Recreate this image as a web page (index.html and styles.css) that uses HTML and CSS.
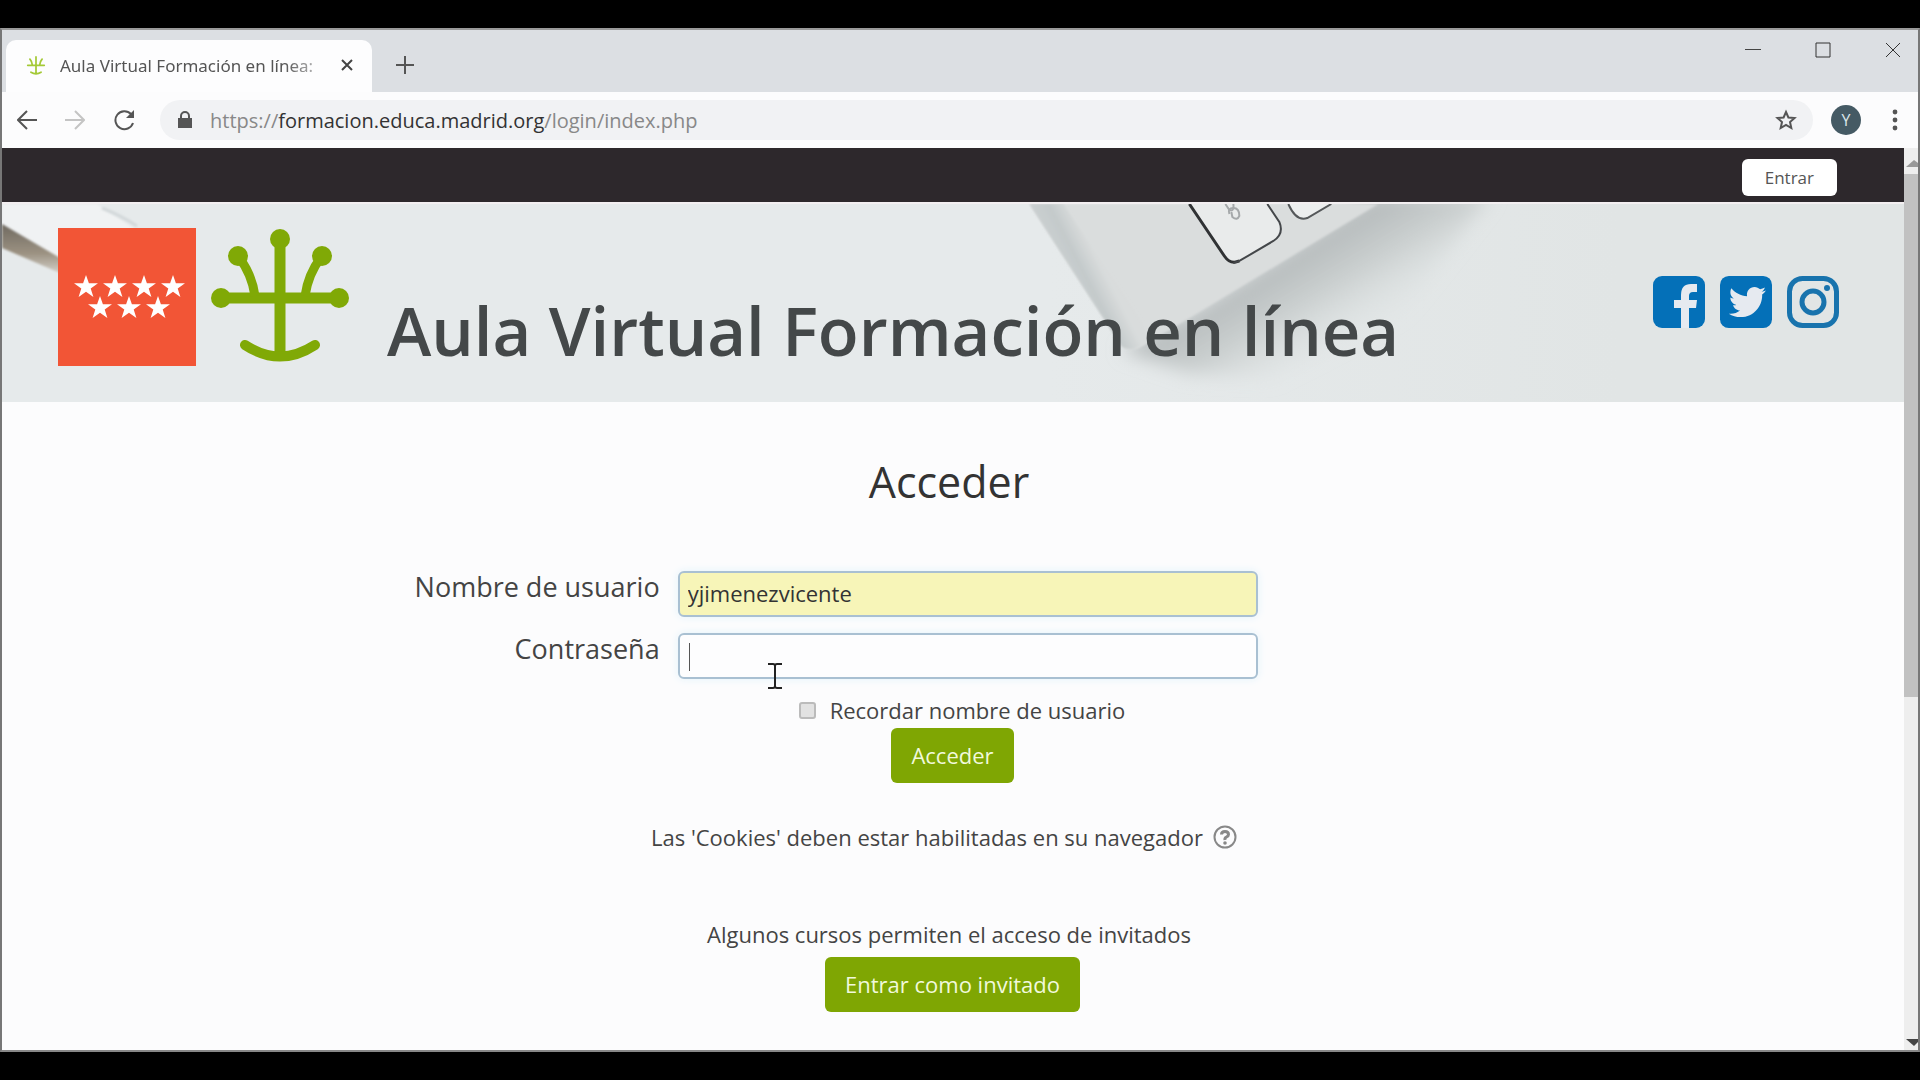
FILE: index.html
```html
<!DOCTYPE html>
<html lang="es">
<head>
    <meta charset="UTF-8" />
    <meta name="viewport" content="width=device-width, initial-scale=1.0"/>
    <title>Aula Virtual Formación en línea</title>
    <link rel="stylesheet" href="styles.css">
</head>
<body>
    <div class="window">
        <!-- TAB STRIP -->
        <div class="tabs">
            <div class="tab">
                <svg class="favicon" viewBox="0 0 138 136" fill="none" stroke="#a4c936" stroke-width="12" stroke-linecap="round">
                    <path d="M69 12V128M12 70H126M44 68Q42 44 27 27M94 68Q96 44 111 27M34 118Q69 140 104 118"/>
                </svg>
                <span class="tab-title">Aula Virtual Formación en línea:</span>
                <button class="icon-btn" aria-label="Cerrar pestaña">
                    <svg width="14" height="14" viewBox="0 0 14 14" stroke="#444" stroke-width="2"><path d="M2 2L12 12M12 2L2 12"/></svg>
                </button>
            </div>
            <button class="icon-btn new-tab" aria-label="Nueva pestaña">
                <svg width="20" height="20" viewBox="0 0 20 20" stroke="#555" stroke-width="2"><path d="M10 1V19M1 10H19"/></svg>
            </button>
            <div class="window-controls">
                <button class="icon-btn" aria-label="Minimizar">
                    <svg width="16" height="16" viewBox="0 0 16 16" stroke="#444" stroke-width="1"><path d="M0 7.500H16"/></svg>
                </button>
                <button class="icon-btn" aria-label="Maximizar">
                    <svg width="16" height="16" viewBox="0 0 16 16" fill="none" stroke="#333"><path d="M1 1H15V15H1Z"/></svg>
                </button>
                <button class="icon-btn" aria-label="Cerrar">
                    <svg width="16" height="16" viewBox="0 0 16 16" stroke="#333"><path d="M1 1L15 15M15 1L1 15"/></svg>
                </button>
            </div>
        </div>

        <!-- ADDRESS BAR -->
        <div class="toolbar">
            <div class="nav-buttons">
                <button class="icon-btn" aria-label="Atrás">
                    <svg width="20" height="20" viewBox="0 0 20 20" fill="none" stroke="#555" stroke-width="2"><path d="M20 10H2M10 1L1 10L10 19"/></svg>
                </button>
                <button class="icon-btn" aria-label="Adelante">
                    <svg width="20" height="20" viewBox="0 0 20 20" fill="none" stroke="#c4c4c4" stroke-width="2"><path d="M0 10H18M10 1L19 10L10 19"/></svg>
                </button>
                <button class="icon-btn" aria-label="Recargar">
                    <svg width="22" height="22" viewBox="0 0 22 22" fill="none" stroke="#555" stroke-width="2"><path d="M18 5A9 9 0 1 0 20 14"/><path d="M21 1V9H13Z" fill="#555" stroke="none"/></svg>
                </button>
            </div>
            <div class="address">
                <svg width="14" height="18" viewBox="0 0 14 18"><path d="M0 7H14V17H0Z" fill="#555"/><path d="M3 8V5A4 4 0 0 1 11 5V8" fill="none" stroke="#555" stroke-width="2"/></svg>
                <span class="url">https://<b>formacion.educa.madrid.org</b>/login/index.php</span>
                <button class="icon-btn" aria-label="Añadir a marcadores">
                    <svg width="22" height="22" viewBox="0 0 22 22" fill="none" stroke="#555" stroke-width="2"><path d="M11 3L13.400 8.500L19.500 9L15 13L16.300 19L11 15.800L5.700 19L7 13L2.500 9L8.600 8.500Z"/></svg>
                </button>
            </div>
            <span class="avatar">Y</span>
            <button class="icon-btn menu" aria-label="Menú">
                <svg width="6" height="22" viewBox="0 0 6 22" fill="#555"><circle cx="3" cy="3" r="2.400"/><circle cx="3" cy="11" r="2.400"/><circle cx="3" cy="19" r="2.400"/></svg>
            </button>
        </div>

        <div class="viewport">
            <div class="page">
                <div class="topbar">
                    <a href="#login" class="login-link">Entrar</a>
                </div>

                <!-- BANNER -->
                <header class="banner">
                    <svg class="banner-bg" viewBox="0 0 1903 200" preserveAspectRatio="xMidYMin slice">
                        <defs>
                            <linearGradient id="desk">
                                <stop offset="0.550" stop-color="#e6eaeb"/>
                                <stop offset="0.850" stop-color="#e1e5e5"/>
                            </linearGradient>
                            <linearGradient id="shadow" gradientUnits="userSpaceOnUse" x1="1265" y1="65" x2="1325" y2="165">
                                <stop offset="0" stop-color="#b6bbbc"/>
                                <stop offset="0.400" stop-color="#cacfcf"/>
                                <stop offset="1" stop-color="#e2e6e6" stop-opacity="0"/>
                            </linearGradient>
                            <linearGradient id="bevel" gradientUnits="userSpaceOnUse" x1="1070" y1="85" x2="1103" y2="68">
                                <stop offset="0" stop-color="#cbd0d1"/>
                                <stop offset="0.500" stop-color="#c4cacb"/>
                                <stop offset="1" stop-color="#d9dcdc"/>
                            </linearGradient>
                            <linearGradient id="pencil" x1="0" y1="0" x2="0" y2="1">
                                <stop offset="0" stop-color="#6f6960"/>
                                <stop offset="0.600" stop-color="#9c9282"/>
                                <stop offset="1" stop-color="#d3cfc8"/>
                            </linearGradient>
                            <filter id="soft" x="-20%" y="-20%" width="140%" height="140%"><feGaussianBlur stdDeviation="9"/></filter>
                            <filter id="edge"><feGaussianBlur stdDeviation="1"/></filter>
                        </defs>
                        <rect width="1903" height="200" fill="url(#desk)"/>
                        <path d="M0 0H95L140 30L58 54L0 20Z" fill="#f0f2f3" filter="url(#edge)"/>
                        <path d="M100 4Q120 12 135 22" fill="none" stroke="#d3d8da" stroke-width="3" filter="url(#edge)"/>
                        <path d="M0 20L58 54V69L0 44Z" fill="url(#pencil)" filter="url(#edge)"/>
                        <path d="M1120 146L1193 108L1375 -10H1490L1400 110L1270 175L1190 170Z" fill="url(#shadow)" filter="url(#soft)"/>
                        <path d="M1028 0H1377L1193 111L1141 142Q1129 149 1120 142Z" fill="#dadddd" filter="url(#edge)"/>
                        <path d="M1028 0H1062L1142 120L1145 138Q1130 150 1120 142Z" fill="url(#bevel)" filter="url(#edge)"/>
                        <path d="M1188 0L1223 52Q1229 60 1238 57L1272 37Q1283 30 1278 18L1266 0Z" fill="#e9ebeb"/>
                        <path d="M1188 0L1223 52Q1229 61 1238 57" fill="none" stroke="#303234" stroke-width="3"/>
                        <path d="M1232 59Q1236 58 1238 57L1272 37Q1283 30 1278 18L1266 0" fill="none" stroke="#44474a" stroke-width="2"/>
                        <path d="M1287 0Q1295 18 1306 14L1330 0Z" fill="#eceeee"/>
                        <path d="M1287 0Q1295 18 1306 14L1330 0" fill="none" stroke="#55585a" stroke-width="2"/>
                        <g fill="none" stroke="#a5a8aa" stroke-width="2">
                            <path d="M1224 0L1228 6Q1233 8 1232 0"/>
                            <path d="M1228 10Q1226 4 1232 4Q1238 4 1238 12Q1236 17 1231 13L1230 8"/>
                        </g>
                    </svg>

                    <div class="brand">
                        <svg class="logo" viewBox="0 0 138 138">
                            <defs>
                                <path id="star" d="M0 -12L2.900 -3.800H12L4.700 1.400L7.400 10L0 4.800L-7.400 10L-4.700 1.400L-12 -3.800H-2.900Z"/>
                            </defs>
                            <rect width="138" height="138" fill="#f25536"/>
                            <g fill="#fff">
                                <use href="#star" x="28" y="59"/>
                                <use href="#star" x="57" y="59"/>
                                <use href="#star" x="86" y="59"/>
                                <use href="#star" x="115" y="59"/>
                                <use href="#star" x="42" y="80"/>
                                <use href="#star" x="71" y="80"/>
                                <use href="#star" x="100" y="80"/>
                            </g>
                        </svg>
                        <svg class="logo" viewBox="0 0 138 138" fill="none" stroke="#80a906">
                            <path d="M69 10V128M10 70H128" stroke-width="11"/>
                            <path d="M44 68Q41 46 27 28M94 68Q97 46 111 28" stroke-width="9"/>
                            <path d="M34 117Q69 140 104 117" stroke-width="10" stroke-linecap="round"/>
                            <g fill="#80a906" stroke="none">
                                <circle cx="69" cy="11" r="10"/>
                                <circle cx="27" cy="28" r="10"/>
                                <circle cx="111" cy="28" r="10"/>
                                <circle cx="10" cy="70" r="10"/>
                                <circle cx="128" cy="70" r="10"/>
                            </g>
                        </svg>
                        <h1>Aula Virtual Formación en línea</h1>
                    </div>

                    <div class="social">
                        <a href="#facebook" aria-label="Facebook">
                            <svg viewBox="0 0 52 52"><rect width="52" height="52" rx="9" fill="#0470b8"/><path d="M28 52V32H21V24H28V19Q28 8 38 8H44V16H40Q36 16 36 20V24H44L43 32H36V52Z" fill="#e6eaf0"/></svg>
                        </a>
                        <a href="#twitter" aria-label="Twitter">
                            <svg viewBox="0 32 448 448"><rect y="32" width="448" height="448" rx="76" fill="#0470b8"/><path fill="#e6eaf0" d="M351.100 190.800c.2 2.800.2 5.700.2 8.500 0 86.700-66 186.600-186.600 186.600-37.200 0-71.700-10.800-100.700-29.400 5.300.6 10.400.8 15.800.8 30.700 0 58.900-10.400 81.400-28-28.800-.6-53-19.500-61.300-45.500 10.100 1.500 19.200 1.500 29.600-1.200-30-6.100-52.500-32.500-52.500-64.400v-.8c8.700 4.900 18.900 7.900 29.600 8.300a65.400 65.400 0 0 1-29.200-54.600c0-12.200 3.200-23.400 8.900-33.100 32.300 39.800 80.800 65.800 135.200 68.600-9.300-44.500 24-80.600 64-80.600 18.900 0 35.900 7.900 47.900 20.700 14.800-2.800 29-8.300 41.600-15.800-4.900 15.200-15.200 28-28.800 36.100 13.200-1.400 26-5.100 37.800-10.200-8.900 13.100-20.100 24.700-32.900 34z" transform="translate(12 0)"/></svg>
                        </a>
                        <a href="#instagram" aria-label="Instagram">
                            <svg viewBox="0 0 52 52" fill="none" stroke="#1873ad" stroke-width="5"><rect x="2.500" y="2.500" width="47" height="47" rx="13"/><circle cx="26" cy="26" r="11"/><circle cx="40" cy="12" r="3" fill="#1873ad" stroke="none"/></svg>
                        </a>
                    </div>
                </header>

                <!-- LOGIN FORM -->
                <main id="login">
                    <h2>Acceder</h2>
                    <form class="login-form">
                        <div class="row">
                            <label for="username">Nombre de usuario</label>
                            <input type="text" id="username" class="autofilled" value="yjimenezvicente">
                        </div>
                        <div class="row">
                            <label for="password">Contraseña</label>
                            <div class="field">
                                <input type="password" id="password">
                                <span class="caret"></span>
                                <svg class="pointer" viewBox="0 0 14 26" fill="none" stroke="#222" stroke-width="2"><path d="M0 1H5Q7 1 7 3Q7 1 9 1H14M7 3V23M0 25H5Q7 25 7 23Q7 25 9 25H14"/></svg>
                            </div>
                        </div>
                        <div class="remember">
                            <input type="checkbox" id="remember">
                            <label for="remember">Recordar nombre de usuario</label>
                        </div>
                        <button type="button" class="btn">Acceder</button>
                    </form>

                    <p class="cookies">Las 'Cookies' deben estar habilitadas en su navegador
                        <a href="#ayuda" aria-label="Ayuda">
                            <svg width="24" height="24" viewBox="0 0 24 24" fill="none" stroke="#888"><circle cx="12" cy="12" r="10.500" stroke-width="2"/><path d="M8.500 9.500Q8.500 6.500 12 6.500T15.500 9.500Q15.500 11 13.500 12T12 15" stroke-width="3"/><circle cx="12" cy="18" r="1.800" fill="#888" stroke="none"/></svg>
                        </a>
                    </p>

                    <form class="guest">
                        <p>Algunos cursos permiten el acceso de invitados</p>
                        <button type="button" class="btn">Entrar como invitado</button>
                    </form>
                </main>
            </div>

            <!-- SCROLLBAR -->
            <div class="scrollbar">
                <svg width="12" height="8" viewBox="0 0 12 8"><path d="M0 7L8 0L12 3V7Z" fill="#999"/></svg>
                <div class="thumb"></div>
                <svg width="12" height="8" viewBox="0 0 12 8"><path d="M0 1H12V4L8 8Z" fill="#444"/></svg>
            </div>
        </div>
    </div>
</body>
</html>
```

FILE: styles.css
```css
* {
    margin: 0;
    padding: 0;
    box-sizing: border-box;
    font-family: 'Open Sans', 'Noto Sans', sans-serif;
}

body {
    background: #000;
    color: #444;
    min-height: 100vh;
    padding: 28px 0;
    display: flex;
}

svg {
    display: block;
}

.window {
    flex: 1;
    display: flex;
    flex-direction: column;
    background: #fcfcfd;
    border: 2px solid #777;
    border-top-color: #999;
    border-bottom-color: #888;
}

.icon-btn {
    background: transparent;
    border: none;
    cursor: pointer;
}

/* tab strip */
.tabs {
    display: flex;
    align-items: flex-end;
    height: 62px;
    background: #dcdfe3;
}

.tab {
    display: flex;
    align-items: center;
    width: 366px;
    height: 52px;
    margin-left: 4px;
    padding: 0 18px 2px 20px;
    background: #fdfdfe;
    border-radius: 10px 10px 0 0;
}

.favicon {
    width: 20px;
    height: 20px;
    margin-right: 14px;
}

.tab-title {
    flex: 1;
    white-space: nowrap;
    font-family: 'Noto Sans', sans-serif;
    font-size: 17px;
    color: #555;
    -webkit-mask-image: linear-gradient(to right, #000 80%, transparent);
    mask-image: linear-gradient(to right, #000 80%, transparent);
}

.new-tab {
    align-self: center;
    margin: 8px 0 0 23px;
}

.window-controls {
    display: flex;
    align-self: flex-start;
    gap: 54px;
    margin-left: auto;
    padding: 12px 17px 0 0;
}

/* address bar */
.toolbar {
    display: flex;
    align-items: center;
    height: 56px;
    padding: 0 20px 0 15px;
}

.nav-buttons {
    display: flex;
    align-items: center;
    gap: 28px;
    margin-right: 25px;
}

.address {
    flex: 1;
    display: flex;
    align-items: center;
    height: 40px;
    padding: 0 16px 0 18px;
    border-radius: 20px;
    background: #f1f2f4;
}

.url {
    flex: 1;
    margin-left: 18px;
    font-size: 20px;
    color: #888;
}

.url b {
    font-weight: normal;
    color: #333;
}

.avatar {
    width: 30px;
    height: 30px;
    margin: 0 31px 0 18px;
    border-radius: 50%;
    background: #455a64;
    color: #dde6ea;
    font-size: 16px;
    line-height: 30px;
    text-align: center;
}

/* page area */
.viewport {
    flex: 1;
    display: flex;
}

.page {
    flex: 1;
}

.topbar {
    display: flex;
    align-items: flex-end;
    justify-content: flex-end;
    height: 54px;
    padding: 0 67px 6px 0;
    background: #2d282c;
}

.login-link {
    padding: 0 23px;
    border-radius: 6px;
    background: #fff;
    color: #555;
    font-size: 17px;
    line-height: 37px;
    text-decoration: none;
}

.banner {
    position: relative;
    display: flex;
    justify-content: space-between;
    height: 200px;
    padding: 24px 65px 0 56px;
    border-top: 2px solid #f3eff1;
}

.banner-bg {
    position: absolute;
    top: 0;
    left: 0;
    width: 100%;
    height: 100%;
}

.brand {
    position: relative;
    display: flex;
    gap: 15px;
}

.logo {
    width: 138px;
    height: 138px;
}

.banner h1 {
    margin: 56px 0 0 23px;
    font-size: 67px;
    font-weight: 600;
    line-height: 92px;
    white-space: nowrap;
    color: #444849;
}

.social {
    position: relative;
    display: flex;
    gap: 15px;
    padding-top: 48px;
}

.social svg {
    width: 52px;
    height: 52px;
}

/* login */
main {
    padding: 50px 8px 0 0;
    font-size: 22px;
    line-height: 30px;
    text-align: center;
}

h2 {
    margin-bottom: 59px;
    font-size: 43px;
    font-weight: normal;
    line-height: 60px;
    color: #333;
}

.row {
    display: grid;
    grid-template-columns: 658fr 581fr 620fr;
    column-gap: 18px;
    margin-bottom: 16px;
}

.row label {
    font-size: 27px;
    line-height: 32px;
    text-align: right;
}

.row input {
    width: 100%;
    height: 46px;
    padding: 0 8px 2px;
    border: 2px solid #a9c0d2;
    border-radius: 6px;
    background: #fdfdfe;
    box-shadow: 0 0 8px #e3f3fb;
    color: #333;
    font-size: 22px;
}

.row .autofilled {
    background: #f7f5b8;
}

.field {
    position: relative;
    height: 46px;
}

.caret {
    position: absolute;
    top: 10px;
    left: 11px;
    width: 1px;
    height: 28px;
    background: #555;
}

.pointer {
    position: absolute;
    top: 30px;
    left: 90px;
    width: 14px;
    height: 26px;
}

.remember {
    display: flex;
    justify-content: center;
    align-items: center;
    gap: 14px;
    margin: 0 0 3px 26px;
}

.remember input {
    appearance: none;
    width: 17px;
    height: 17px;
    border: 2px solid #bbb;
    border-radius: 3px;
    background: #e2e2e2;
}

.btn {
    margin-left: 7px;
    padding: 0 20px;
    border: none;
    border-radius: 6px;
    background: #7fa603;
    color: #f1f9dc;
    font-size: 22px;
    line-height: 55px;
    cursor: pointer;
}

.cookies {
    display: flex;
    justify-content: center;
    align-items: center;
    gap: 10px;
    margin: 39px 10px 67px 0;
}

.guest p {
    margin-bottom: 8px;
}

.scrollbar {
    display: flex;
    flex-direction: column;
    align-items: flex-end;
    width: 14px;
    padding: 12px 0 4px;
    background: #eee;
}

.thumb {
    width: 100%;
    height: 59%;
    margin: 6px 0 auto;
    background: #c1c1c1;
}
```
